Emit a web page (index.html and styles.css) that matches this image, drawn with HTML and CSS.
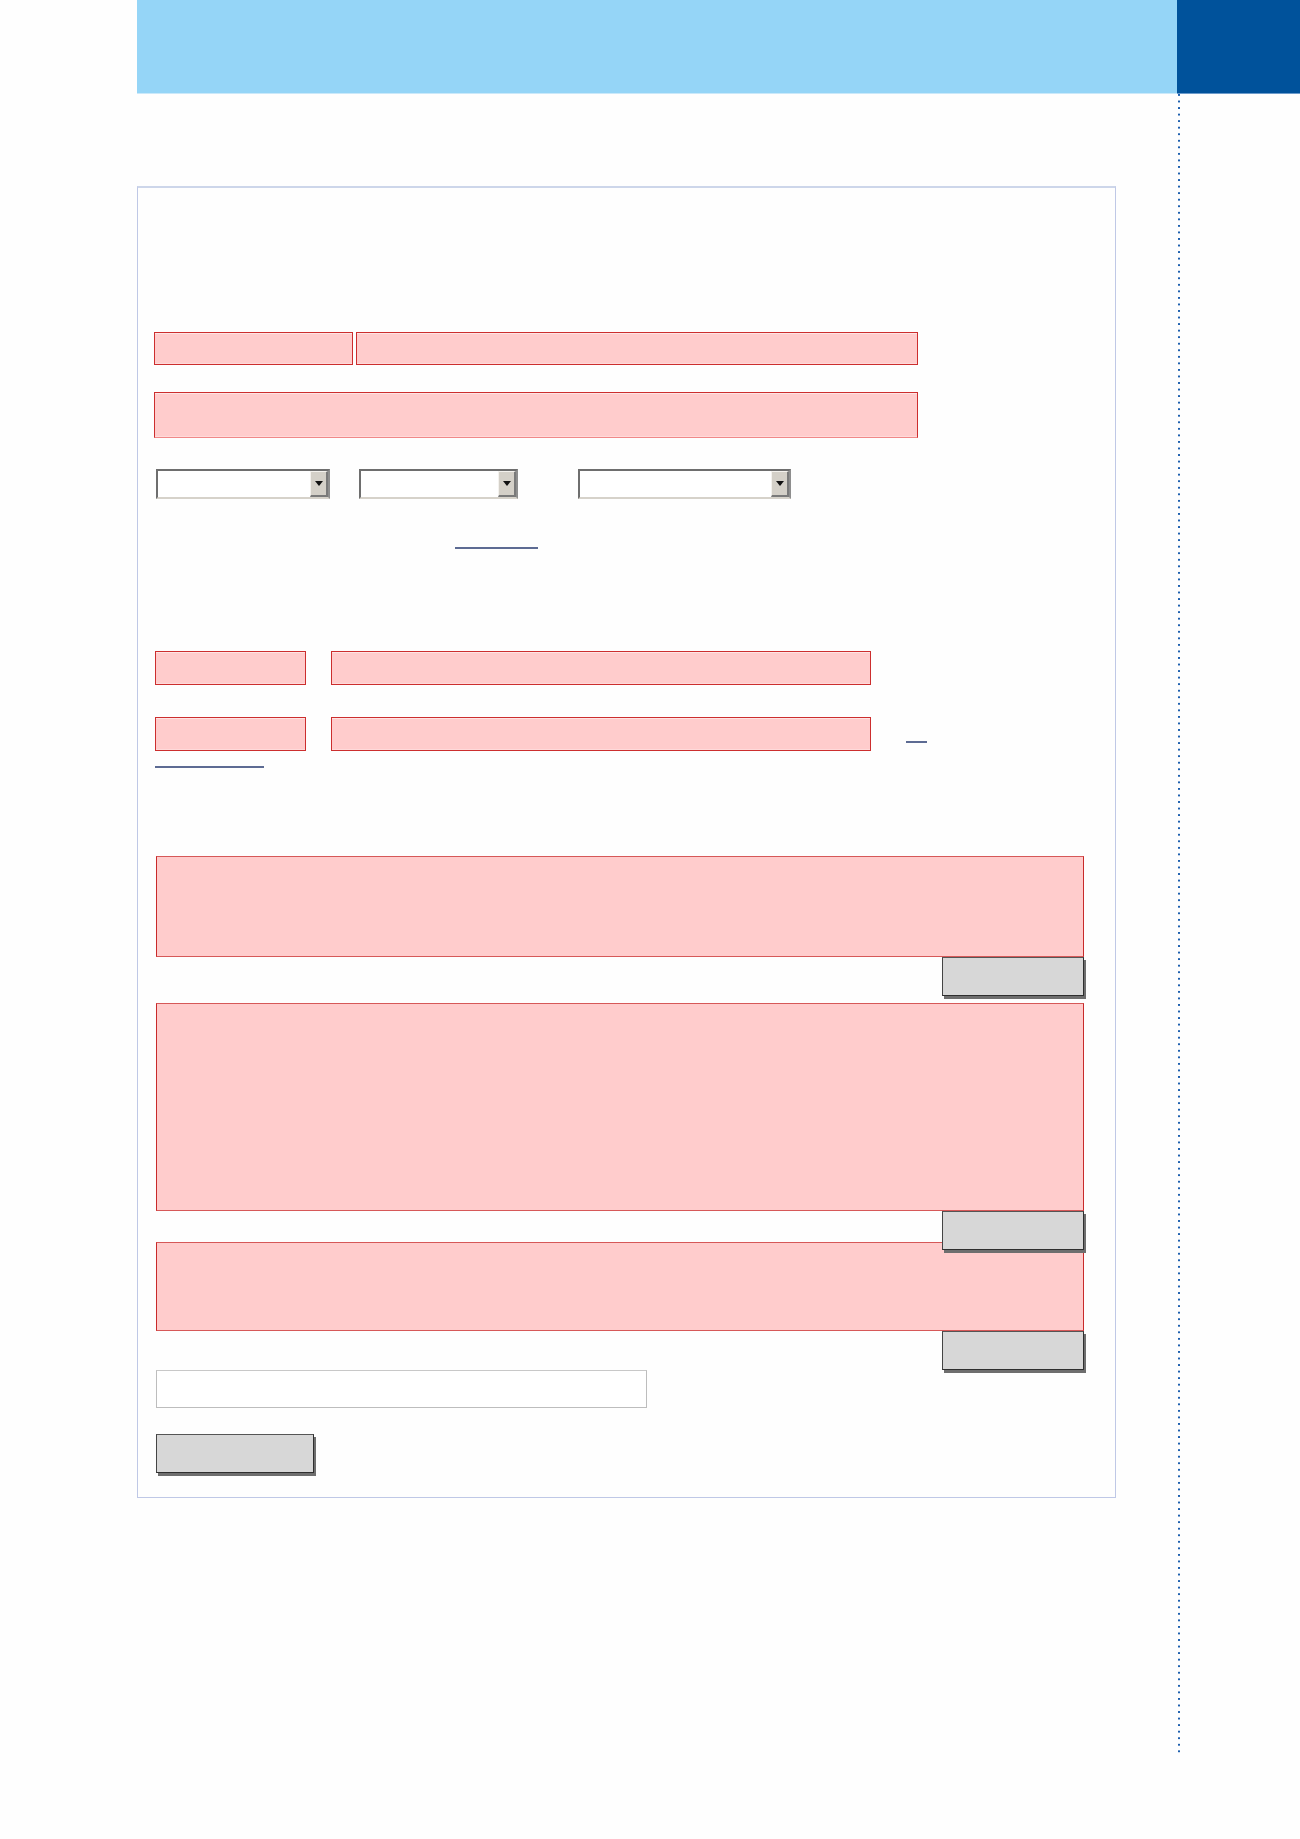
FILE: index.html
```html
<!DOCTYPE html>
<html lang="en">
<head>
<meta charset="utf-8">
<title>Form</title>
<link rel="stylesheet" href="styles.css">
</head>
<body>
<div class="page">
  <div class="gutter"></div>
  <div class="main">
    <div class="header"></div>
    <form class="form-box">
      <div class="row row-a">
        <input class="field f-a1" type="text">
        <input class="field f-a2" type="text">
      </div>
      <input class="field f-b" type="text">
      <div class="row row-selects">
        <div class="select s1"><span class="select-val"></span><span class="select-btn"><span class="tri"></span></span></div>
        <div class="select s2"><span class="select-val"></span><span class="select-btn"><span class="tri"></span></span></div>
        <div class="select s3"><span class="select-val"></span><span class="select-btn"><span class="tri"></span></span></div>
      </div>
      <a class="link link-1" href="#"></a>
      <div class="row row-c">
        <input class="field f-short" type="text">
        <input class="field f-long" type="text">
      </div>
      <div class="row row-d">
        <input class="field f-short" type="text">
        <input class="field f-long" type="text">
        <a class="link link-2" href="#"></a>
      </div>
      <a class="link link-3" href="#"></a>
      <textarea class="area a1"></textarea>
      <div class="btn-row"><button class="btn" type="button"></button></div>
      <textarea class="area a2"></textarea>
      <div class="btn-row overlap"><button class="btn" type="button"></button></div>
      <textarea class="area a3"></textarea>
      <div class="btn-row"><button class="btn" type="button"></button></div>
      <input class="plain" type="text">
      <button class="btn btn-submit" type="button"></button>
    </form>
  </div>
  <div class="side">
    <div class="side-header"></div>
    <div class="dots"></div>
  </div>
</div>
</body>
</html>
```
FILE: styles.css
```css
html, body {
  margin: 0;
  padding: 0;
  background: #fefefe;
  font-family: "Liberation Sans", Arial, sans-serif;
}

.page {
  display: flex;
  width: 1300px;
  min-height: 1839px;
}

.gutter {
  width: 137px;
  flex: none;
}

.main {
  width: 1040px;
  flex: none;
}

.header {
  height: 93px;
  background: #95d5f7;
  border-bottom: 1px solid #cbe9fa;
}

.side {
  width: 123px;
  flex: none;
}

.side-header {
  height: 93px;
  background: #00529b;
  border-bottom: 1px solid #6c9bcb;
}

.dots {
  margin-left: 1px;
  width: 2px;
  height: 1661px;
  background-image: linear-gradient(to bottom, #1d5fae 0, #1d5fae 2px, transparent 2px);
  background-size: 2px 6.55px;
  background-repeat: repeat-y;
}

.form-box {
  margin: 92px 0 0 0;
  width: 979px;
  box-sizing: border-box;
  border: 1px solid #bfc8e6;
  border-top: 2px solid #cdd6ea;
  padding: 0 31px 24px 18px;
  display: flex;
  flex-direction: column;
  align-items: flex-start;
}

.row {
  display: flex;
  align-items: flex-start;
}

.field {
  box-sizing: border-box;
  margin: 0;
  padding: 0;
  background: #ffcccc;
  border: 1px solid #cc2e2e;
  box-shadow: inset 0 1px 0 #ffe4e4, inset 0 -1px 0 #ffdada;
  font: inherit;
  outline: none;
}

.row-a {
  margin-top: 144px;
  margin-left: -2px;
  gap: 3px;
}

.f-a1 { width: 199px; height: 33px; }
.f-a2 { width: 562px; height: 33px; }

.f-b {
  margin-top: 27px;
  margin-left: -2px;
  width: 764px;
  height: 46px;
  border-bottom-color: #f08888;
}

.row-selects {
  margin-top: 31px;
}

.select {
  box-sizing: border-box;
  height: 30px;
  display: flex;
  background: #ffffff;
  border-top: 2px solid #6e6e6e;
  border-left: 2px solid #6e6e6e;
  border-right: 2px solid #8e8e8e;
  border-bottom: 2px solid #d6d2ca;
}

.select-val {
  flex: 1;
}

.select-btn {
  box-sizing: border-box;
  width: 18px;
  background: #d4d0c8;
  border-top: 1px solid #f4f2ee;
  border-left: 1px solid #f4f2ee;
  border-right: 2px solid #7a7a7a;
  border-bottom: 2px solid #7a7a7a;
  display: flex;
  align-items: center;
  justify-content: center;
}

.tri {
  width: 0;
  height: 0;
  border-left: 4px solid transparent;
  border-right: 4px solid transparent;
  border-top: 5px solid #111111;
}

.s1 { width: 174px; }
.s2 { width: 159px; margin-left: 29px; }
.s3 { width: 213px; margin-left: 60px; }

.link {
  display: block;
  height: 0;
  border-bottom: 2px solid #5d6b93;
  text-decoration: none;
}

.link-1 {
  margin-top: 48px;
  margin-left: 299px;
  width: 83px;
}

.row-c {
  margin-top: 102px;
  margin-left: -1px;
}

.row-d {
  margin-top: 32px;
  margin-left: -1px;
}

.f-short { width: 151px; height: 34px; }
.f-long { width: 540px; height: 34px; margin-left: 25px; }

.link-2 {
  width: 21px;
  margin-left: 35px;
  margin-top: 24px;
}

.link-3 {
  margin-top: 15px;
  margin-left: -1px;
  width: 109px;
}

.area {
  display: block;
  box-sizing: border-box;
  width: 928px;
  margin: 0;
  padding: 0;
  resize: none;
  background: #ffcccc;
  border: 1px solid #c82a2a;
  border-top-color: #d65858;
  border-bottom-color: #d65858;
  outline: none;
  font: inherit;
}

.a1 { margin-top: 88px; height: 101px; }
.a2 { margin-top: 7px; height: 208px; }
.a3 { height: 89px; }

.btn-row {
  width: 928px;
  display: flex;
  justify-content: flex-end;
}

.btn-row.overlap {
  margin-bottom: -8px;
  position: relative;
  z-index: 1;
}

.btn {
  box-sizing: border-box;
  width: 142px;
  height: 39px;
  margin: 0;
  padding: 0;
  background: #d7d7d7;
  border: 1px solid #2f2f2f;
  border-top-color: #555555;
  border-left-color: #444444;
  box-shadow: 2px 3px 0 #6e6e6e;
  font: inherit;
}

.plain {
  box-sizing: border-box;
  width: 491px;
  height: 38px;
  margin: 0;
  padding: 0;
  background: #ffffff;
  border: 1px solid #bdbdbd;
  border-top-color: #c8c8c8;
  outline: none;
  font: inherit;
}

.btn-submit {
  margin-top: 26px;
  width: 158px;
}
```
